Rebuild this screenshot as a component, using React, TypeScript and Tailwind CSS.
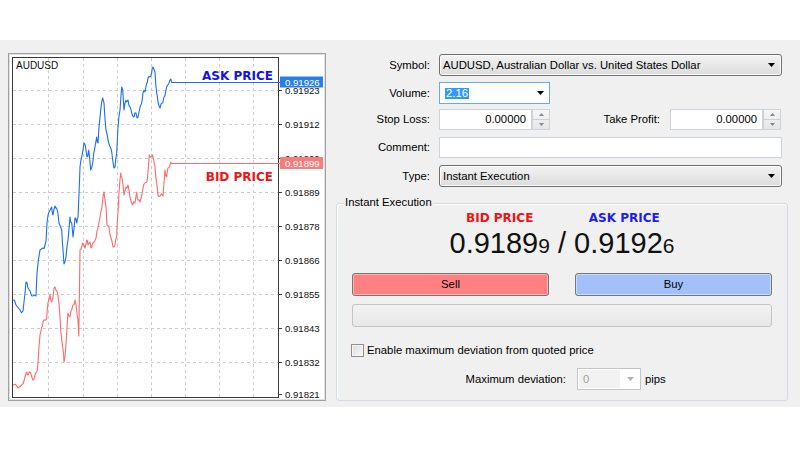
import React from "react";

const ask =
  "13,300 16,305 20,310 23,311 24,302 26,282 28,288 30,291 33,296 36,296 37,273 40,250 43,248 45,245 46,241 47,223 49,212 51.7,207 53,215 55,206 56.7,208 59,223 61.7,230 63,250 64,264 66,257 68,240 70,217 71.7,223 73,237 75,218 76.7,223 78,217 80,167 81.7,157 84,143 86,150 87,157 88.7,150 90.7,170 92.7,163 95,147 96.7,137 98,143 99,127 100.7,110 102.7,98 104,103 106,130 108,140 110.7,148 112.7,160 114,168 115,167 116.7,153 118,127 120,110 121.7,87 122.7,90 124,110 125,103 126.7,102 128,100 130,107 131.7,113 134,117 136,113 137,118 139,112 141.7,103 143,93 145,92 146.7,83 148,78 150,77 151.7,73 153,67 155,72 156.7,93 158,102 160,108 162.7,103 164,97 166,90 167.7,85 170,80 171.7,82.5 280,82.5";

const bid =
  "13,385 18,388 21.7,385 25,377 26.7,372 28,375 30.7,373 32.7,380 35,375 37,372 38,363 40,335 41.7,327 43,322 45,320 46.7,318 48,303 50,295 51.7,302 53,298 54,288 56,290 57.7,293 59,303 60.7,330 62.7,347 64,362 65,357 66.7,333 68,313 70,317 71.7,310 73,305 75,300 76.7,310 78,320 78.8,336 80,250 82.7,243 85,248 86.7,240 88,245 90,242 91.7,248 93,243 96,238 98,228 100.7,213 102.7,200 104,192 106,207 107,225 109,227 111,238 113,247 115,245 116.7,237 117,227 119,193 120.7,173 122,178 124,195 126,187 128,185 130,197 132.7,205 135,203 136.7,192 138,200 140,202 142.7,190 145,183 146.7,182 148,172 149.3,155 151.7,157 153,157 155,167 156.7,183 158,195 160,196 163,196 165,170 166.7,177 168,168 170,165 171.7,163.5 280,163.5";

// small tick-level noise between the traced points, so the lines look like a real feed
function roughen(src: string) {
  const pts = src.split(" ").map((p) => p.split(",").map(Number));
  const out: string[] = [];
  pts.forEach(([x, y], i) => {
    out.push(`${x},${y}`);
    const next = pts[i + 1];
    if (!next || next[0] - x > 20 || next[0] - x < 1.2) return;
    const off = (((i * 7) % 5) - 2) * 1.1;
    out.push(`${((x + next[0]) / 2).toFixed(1)},${((y + next[1]) / 2 + off).toFixed(1)}`);
  });
  return out.join(" ");
}

const levels = [
  { y: 90, t: "0.91923" },
  { y: 124, t: "0.91912" },
  { y: 158, t: "0.91900" },
  { y: 192, t: "0.91889" },
  { y: 226, t: "0.91878" },
  { y: 260, t: "0.91866" },
  { y: 294, t: "0.91855" },
  { y: 328, t: "0.91843" },
  { y: 362, t: "0.91832" },
  { y: 394, t: "0.91821" },
];

const cols = [48, 83, 117, 151, 185, 219, 253];

function Chart() {
  return (
    <div className="h-[348px] w-[318px] shrink-0 border border-[#a0a0a0] bg-white">
      <svg width="316" height="346" viewBox="9 54 316 346" className="block">
        <rect x="9.5" y="54.5" width="315" height="345" fill="#fff" stroke="#e2e2e2" />
        {levels.slice(0, 9).map((l) => (
          <line key={l.y} x1="13" x2="278" y1={l.y + 0.5} y2={l.y + 0.5} stroke="#cccccc" strokeDasharray="3 3" />
        ))}
        {cols.map((x) => (
          <line key={x} x1={x + 0.5} x2={x + 0.5} y1="58" y2="397" stroke="#cccccc" strokeDasharray="3 3" />
        ))}
        <rect x="12.5" y="57.5" width="266" height="340" fill="none" stroke="#3a3a3a" />
        {levels.map((l) => (
          <g key={l.t}>
            <line x1="279" x2="282" y1={l.y + 0.5} y2={l.y + 0.5} stroke="#3a3a3a" />
            <text x="285" y={l.y + 3.5} fontFamily="Liberation Sans, Arial, sans-serif" fontSize="9.6" fill="#111">
              {l.t}
            </text>
          </g>
        ))}
        <text x="16" y="69" fontFamily="Liberation Sans, Arial, sans-serif" fontSize="10" fill="#111">
          AUDUSD
        </text>
        <polyline points={roughen(bid)} fill="none" stroke="#ff6a6a" strokeWidth="1.1" strokeLinejoin="round" />
        <polyline points={roughen(ask)} fill="none" stroke="#1c6ef2" strokeWidth="1.1" strokeLinejoin="round" />
        <rect x="280" y="76.5" width="43" height="11" fill="#2b7de9" />
        <text x="285" y="85.5" fontFamily="Liberation Sans, Arial, sans-serif" fontSize="9.6" fill="#fff">
          0.91926
        </text>
        <rect x="280" y="157" width="43" height="12" fill="#f87c7c" />
        <text x="285" y="166.5" fontFamily="Liberation Sans, Arial, sans-serif" fontSize="9.6" fill="#fff">
          0.91899
        </text>
        <text x="273" y="80" textAnchor="end" fontFamily="DejaVu Sans, sans-serif" fontWeight="bold" fontSize="12" fill="#1414e6">
          ASK PRICE
        </text>
        <text x="273" y="181" textAnchor="end" fontFamily="DejaVu Sans, sans-serif" fontWeight="bold" fontSize="12" fill="#f01414">
          BID PRICE
        </text>
      </svg>
    </div>
  );
}

function Caret({ color = "#000" }: { color?: string }) {
  return (
    <svg width="7" height="4" viewBox="0 0 7 4" className="shrink-0">
      <path d="M0 0H7L3.5 4Z" fill={color} />
    </svg>
  );
}

function Select({ value, className = "" }: { value: string; className?: string }) {
  return (
    <div
      className={`flex h-[22px] items-center justify-between rounded-[3px] border border-[#707070] bg-linear-to-b from-[#f3f3f3] to-[#dcdcdc] pl-[3px] pr-[6px] shadow-[inset_0_0_0_1px_#fbfbfb] ${className}`}
    >
      <span>{value}</span>
      <Caret />
    </div>
  );
}

function SpinInput({ value }: { value: string }) {
  return (
    <div className="flex h-[21px] w-[111px]">
      <div className="flex flex-1 items-center justify-end border border-[#cdd3da] bg-white pr-[5px]">{value}</div>
      <div className="flex w-[18px] flex-col border border-[#cdd3da] bg-linear-to-b from-[#f6f6f6] to-[#e6e6e6]">
        <div className="flex flex-1 items-center justify-center border-b border-[#d0d0d0]">
          <svg width="5" height="3" viewBox="0 0 5 3">
            <path d="M0 3H5L2.5 0Z" fill="#7a8a9c" />
          </svg>
        </div>
        <div className="flex flex-1 items-center justify-center">
          <svg width="5" height="3" viewBox="0 0 5 3">
            <path d="M0 0H5L2.5 3Z" fill="#7a8a9c" />
          </svg>
        </div>
      </div>
    </div>
  );
}

function Row({ label, className = "", children }: { label: string; className?: string; children: React.ReactNode }) {
  return (
    <div className={`flex items-center ${className}`}>
      <div className="w-[94px] text-right">{label}</div>
      <div className="ml-[9px] flex items-center">{children}</div>
    </div>
  );
}

export default function App() {
  return (
    <div className="h-[450px] w-[800px] bg-white pt-[40px] font-['Liberation_Sans',Arial,sans-serif] text-[11.3px] text-black">
      <div className="flex h-[367px] bg-[#f0f0f0] pl-[8px] pt-[13px]">
        <Chart />

        <div className="ml-[10px] flex w-[452px] flex-col">
          <Row label="Symbol:" className="mt-[1px]">
            <Select className="w-[343px]" value="AUDUSD, Australian Dollar vs. United States Dollar" />
          </Row>
          <Row label="Volume:" className="mt-[6px]">
            <div className="flex h-[22px] w-[111px] items-center justify-between border border-[#6aa8e6] bg-white pl-[5px] pr-[5px]">
              <span className="bg-[#3399ff] px-[1px] leading-[11px] text-white">2.16</span>
              <Caret />
            </div>
          </Row>
          <div className="mt-[5px] flex items-center">
            <div className="w-[94px] text-right">Stop Loss:</div>
            <div className="ml-[9px]">
              <SpinInput value="0.00000" />
            </div>
            <div className="w-[110px] text-right">Take Profit:</div>
            <div className="ml-[10px]">
              <SpinInput value="0.00000" />
            </div>
          </div>
          <Row label="Comment:" className="mt-[7px]">
            <div className="h-[21px] w-[343px] border border-[#cdd3da] bg-white" />
          </Row>
          <Row label="Type:" className="mt-[7px]">
            <Select className="w-[343px]" value="Instant Execution" />
          </Row>

          <div className="relative mt-[16px] h-[198px] w-[452px] rounded-[3px] border border-[#d3dce3] px-[15px] pt-[7px] shadow-[inset_1px_1px_0_#fff]">
            <span className="absolute left-[7px] top-[-8px] bg-[#f0f0f0] px-[1px] leading-[13px]">Instant Execution</span>

            <div className="flex items-end justify-center">
              <div className="flex flex-col items-center">
                <span className="font-['DejaVu_Sans',sans-serif] text-[12px] font-bold leading-[14px] text-[#f01414]">BID PRICE</span>
                <span className="mt-[3px] text-[29px] leading-[30px] text-[#111]">
                  0.9189<span className="text-[21px] leading-none">9</span>
                </span>
              </div>
              <span className="text-[29px] leading-[30px] text-[#111] whitespace-pre"> / </span>
              <div className="flex flex-col items-center">
                <span className="font-['DejaVu_Sans',sans-serif] text-[12px] font-bold leading-[14px] text-[#1e1ef0]">ASK PRICE</span>
                <span className="mt-[3px] text-[29px] leading-[30px] text-[#111]">
                  0.9192<span className="text-[21px] leading-none">6</span>
                </span>
              </div>
            </div>

            <div className="mt-[15px] flex justify-between">
              <div className="flex h-[23px] w-[197px] items-center justify-center rounded-[3px] border border-[#767676] bg-[#ff8080] shadow-[inset_0_0_0_1px_#ffb0b0]">
                Sell
              </div>
              <div className="flex h-[23px] w-[197px] items-center justify-center rounded-[3px] border border-[#767676] bg-[#a2c1fa] shadow-[inset_0_0_0_1px_#cadcfd]">
                Buy
              </div>
            </div>

            <div className="mt-[8px] h-[23px] w-full rounded-[3px] border border-[#c4c4c4] bg-linear-to-b from-[#f2f2f2] to-[#e8e8e8]" />

            <div className="ml-[-1px] mt-[17px] flex h-[13px] items-center">
              <div className="h-[13px] w-[13px] border border-[#8f8f8f] bg-linear-to-br from-[#dcdcdc] to-[#f8f8f8] shadow-[inset_0_0_0_1px_#f4f4f4]" />
              <span className="ml-[3px]">Enable maximum deviation from quoted price</span>
            </div>

            <div className="mt-[11px] flex h-[22px] items-center">
              <div className="w-[214px] text-right">Maximum deviation:</div>
              <div className="ml-[11px] flex h-[22px] w-[64px] items-center border border-[#c2c6ca] bg-white">
                <div className="ml-[1px] flex h-[18px] w-[41px] items-center bg-[#f2f2f2] pl-[4px] text-[#a0a0a0]">0</div>
                <div className="flex flex-1 justify-center">
                  <Caret color="#b0b0b0" />
                </div>
              </div>
              <span className="ml-[4px]">pips</span>
            </div>
          </div>
        </div>
      </div>
    </div>
  );
}
